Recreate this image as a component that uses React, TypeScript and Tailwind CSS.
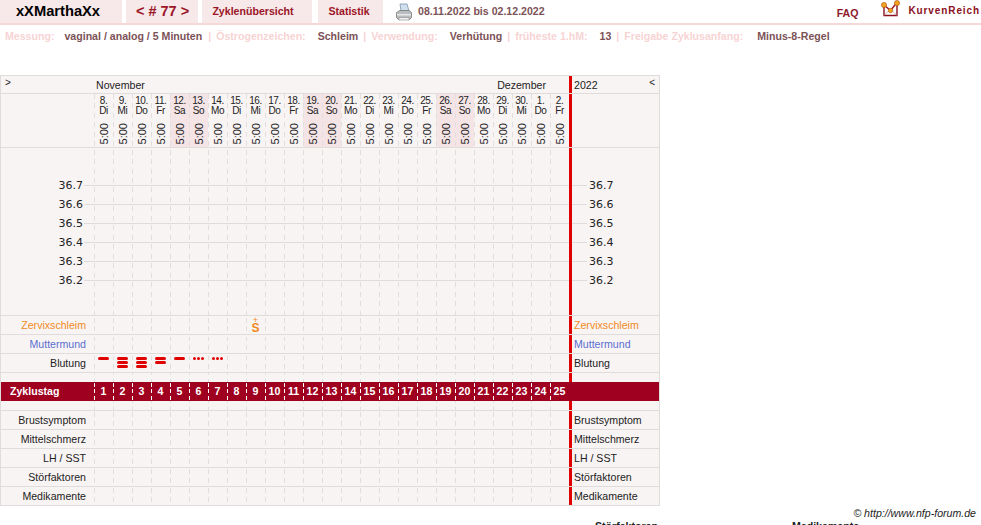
import React from "react";

const days = [
  ["8.", "Di"], ["9.", "Mi"], ["10.", "Do"], ["11.", "Fr"], ["12.", "Sa"], ["13.", "So"], ["14.", "Mo"],
  ["15.", "Di"], ["16.", "Mi"], ["17.", "Do"], ["18.", "Fr"], ["19.", "Sa"], ["20.", "So"], ["21.", "Mo"],
  ["22.", "Di"], ["23.", "Mi"], ["24.", "Do"], ["25.", "Fr"], ["26.", "Sa"], ["27.", "So"], ["28.", "Mo"],
  ["29.", "Di"], ["30.", "Mi"], ["1.", "Do"], ["2.", "Fr"],
];

// dashed column line, two dashes per 19px row
const dash =
  "bg-[linear-gradient(transparent_2px,#e2dedd_2px,#e2dedd_7px,transparent_7px,transparent_11px,#e2dedd_11px,#e2dedd_16px,transparent_16px)] bg-[length:1px_19px] bg-repeat-y bg-left";
const dashWhite =
  "bg-[linear-gradient(transparent_1px,#ffffff_1px,#ffffff_5px,transparent_5px,transparent_7px,#ffffff_7px,#ffffff_11px,transparent_11px,transparent_14px,#ffffff_14px,#ffffff_18px,transparent_18px)] bg-[length:1px_19px] bg-repeat-y bg-left";

const Printer = () => (
  <svg width="18" height="18" viewBox="0 0 18 18">
    <path d="M5 1h7l2 7H6z" fill="#cfe0ee" stroke="#7f93a5" strokeWidth="0.8" />
    <path d="M1.5 9.5 5 7.5h9l2.5 2v5l-2 2h-11l-2-2z" fill="#b9bdbf" stroke="#777" strokeWidth="0.8" />
    <path d="M2 11h14v1.5H2z" fill="#e6e8e9" />
    <path d="M4 14.5h10V17H4z" fill="#f2f2f2" stroke="#888" strokeWidth="0.6" />
  </svg>
);

const Logo = () => (
  <svg width="20" height="18" viewBox="0 0 20 18">
    <path d="M3 5.5v10h13V4" fill="none" stroke="#8b1022" strokeWidth="1.4" />
    <path d="M3 15.5 7.5 11M16 15.5 11.5 11" fill="none" stroke="#c9a0a6" strokeWidth="0.8" />
    <path d="M3 5 9.5 10.5 16 2.5" fill="none" stroke="#a01020" strokeWidth="1.4" />
    <circle cx="3" cy="5" r="2.6" fill="#f2a21b" stroke="#a8501a" strokeWidth="0.6" />
    <circle cx="9.5" cy="10.5" r="2.2" fill="#f2a21b" stroke="#a8501a" strokeWidth="0.6" />
    <circle cx="16" cy="3" r="2.6" fill="#f2a21b" stroke="#a8501a" strokeWidth="0.6" />
  </svg>
);

// one row of the table: label, 25 day cells, red bar, right label
const Row = ({
  label,
  color = "text-[#222]",
  h = "h-[19px] border-b border-[#e0dcdc]",
  right,
  cell,
}: {
  label?: string;
  color?: string;
  h?: string;
  right?: string;
  cell?: (i: number) => React.ReactNode;
}) => (
  <div className={`flex ${h}`}>
    <div className={`w-[93px] shrink-0 pr-2 text-right leading-[18px] ${color}`}>
      {label}
    </div>
    {days.map((_, i) => (
      <div key={i} className={`relative w-[19px] shrink-0 ${dash}`}>
        {cell && cell(i)}
      </div>
    ))}
    <div className="w-[3px] shrink-0 bg-[#e00000]" />
    <div className={`flex-1 pl-[2px] leading-[18px] ${color}`}>{right}</div>
  </div>
);

const temps = ["36.7", "36.6", "36.5", "36.4", "36.3", "36.2"];

const TempRow = ({ t }: { t?: string }) => (
  <div className="flex h-[19px]">
    <div className="flex w-[93px] shrink-0 items-center">
      <span className="w-[83px] pr-[1px] pt-[2px] text-right font-['DejaVu_Sans'] text-[11px] text-[#222]">{t}</span>
      {t && <span className="h-px flex-1 bg-[#e0dcdc]" />}
    </div>
    {days.map((_, i) => (
      <div key={i} className={`flex w-[19px] shrink-0 items-center ${dash}`}>
        {t && <span className="h-px w-full bg-[#e0dcdc]" />}
      </div>
    ))}
    <div className="w-[3px] shrink-0 bg-[#e00000]" />
    <div className="flex flex-1 items-center">
      {t && <span className="h-px w-[15px] bg-[#e0dcdc]" />}
      {t && <span className="pl-[2px] pt-[2px] font-['DejaVu_Sans'] text-[11px] text-[#222]">{t}</span>}
    </div>
  </div>
);

const bleeding: Record<number, number> = { 0: 1, 1: 3, 2: 3, 3: 2, 4: 1 };

const bloodCell = (i: number) => {
  if (bleeding[i]) {
    return (
      <div className="flex flex-col items-center gap-[1px] pt-[3px]">
        {Array.from({ length: bleeding[i] }).map((_, k) => (
          <span key={k} className="h-[3px] w-[11px] rounded-full bg-[#e00000]" />
        ))}
      </div>
    );
  }
  if (i === 5 || i === 6) {
    return (
      <div className="flex justify-center gap-[1px] pt-[3px]">
        <span className="h-[3px] w-[3px] rounded-full bg-[#e00000]" />
        <span className="h-[3px] w-[3px] rounded-full bg-[#e00000]" />
        <span className="h-[3px] w-[3px] rounded-full bg-[#e00000]" />
      </div>
    );
  }
  return null;
};

export default function App() {
  return (
    <div className="relative h-[525px] w-[981px] overflow-hidden bg-white font-['Liberation_Sans',Arial,sans-serif] text-[10.6px]">
      {/* top bar */}
      <div className="flex h-[25px] items-stretch border-b-2 border-[#f6d8d8]">
        <div className="flex w-[122px] items-center justify-center bg-[#f7e9e9] pr-[6px] text-[14.7px] font-bold text-black">xXMarthaXx</div>
        <div className="ml-[4px] flex w-[72px] items-center justify-center bg-[#f7e9e9] pl-[1px] text-[14.5px] font-bold text-[#9b1526]">&lt; # 77 &gt;</div>
        <div className="ml-[4px] flex w-[110px] items-center justify-center bg-[#f7e9e9] pr-[8px] font-bold text-[#9b1526]">Zyklenübersicht</div>
        <div className="ml-[6px] flex w-[65px] items-center justify-center bg-[#f7e9e9] pr-[3px] font-bold text-[#9b1526]">Statistik</div>
        <div className="ml-[12px] flex items-center"><Printer /></div>
        <div className="ml-[5px] flex items-center font-bold text-[#7c5257]">08.11.2022 bis 02.12.2022</div>
        <div className="ml-auto flex items-end pb-[1px] font-bold text-[#8b1a2a]">FAQ</div>
        <div className="ml-[23px] flex pb-[3px]"><Logo /></div>
        <div className="ml-[7px] mr-[1px] flex pt-[3px] text-[10px] font-bold tracking-[0.9px] text-[#8b1022]">KurvenReich</div>
      </div>

      {/* info line */}
      <div className="mt-[4px] flex h-[14px] items-center whitespace-pre font-bold leading-[14px]">
        <span className="ml-[5px] text-[#f7d4d4]">Messung:</span>
        <span className="ml-[10px] text-[#7c5257]">vaginal / analog / 5 Minuten</span>
        <span className="ml-[6px] text-[#f7d4d4]">|</span>
        <span className="ml-[5px] text-[#f7d4d4]">Östrogenzeichen:</span>
        <span className="ml-[12px] text-[#7c5257]">Schleim</span>
        <span className="ml-[5px] text-[#f7d4d4]">|</span>
        <span className="ml-[5px] text-[#f7d4d4]">Verwendung:</span>
        <span className="ml-[12px] text-[#7c5257]">Verhütung</span>
        <span className="ml-[5px] text-[#f7d4d4]">|</span>
        <span className="ml-[5px] text-[#f7d4d4]">früheste 1.hM:</span>
        <span className="ml-[12px] text-[#7c5257]">13</span>
        <span className="ml-[5px] text-[#f7d4d4]">|</span>
        <span className="ml-[5px] text-[#f7d4d4]">Freigabe Zyklusanfang:</span>
        <span className="ml-[14px] text-[#7c5257]">Minus-8-Regel</span>
      </div>

      {/* table */}
      <div className="mt-[32px] w-[660px] border-t border-r border-l border-[#e0dcdc] bg-[#f9f4f4] text-[#222]">
        <div className="flex h-[18px] border-b border-[#e0dcdc]">
          <div className="w-[93px] shrink-0 pl-[4px] text-[10px] leading-[14px]">&gt;</div>
          <div className="flex w-[475px] shrink-0 justify-between leading-[18px]">
            <span className="pl-[2px]">November</span>
            <span className="pr-[23px]">Dezember</span>
          </div>
          <div className="w-[3px] shrink-0 bg-[#e00000]" />
          <div className="flex flex-1 justify-between pl-[2px] leading-[18px]">
            <span>2022</span>
            <span className="pr-[4px] text-[10px] leading-[14px]">&lt;</span>
          </div>
        </div>

        <div className="flex h-[54px] border-b border-[#e0dcdc]">
          <div className="w-[93px] shrink-0" />
          {days.map((d, i) => (
            <div
              key={i}
              className={`flex w-[19px] shrink-0 flex-col items-center ${dash} ${i % 7 === 4 || i % 7 === 5 ? "bg-[#f4e4e6]" : ""}`}
            >
              <div className="mt-[2px] text-center text-[10px] leading-[10px] tracking-[-0.4px]">
                {d[0]}
                <br />
                {d[1]}
              </div>
              <div className="mt-[7px] rotate-180 text-[11px] leading-[12px] [writing-mode:vertical-rl]">5:00</div>
            </div>
          ))}
          <div className="w-[3px] shrink-0 bg-[#e00000]" />
          <div className="flex-1" />
        </div>

        {/* temperature area */}
        <div className="h-[28px] overflow-hidden">
          <TempRow />
          <TempRow />
        </div>
        {temps.map((t) => (
          <TempRow key={t} t={t} />
        ))}
        <div className="h-[26px] overflow-hidden border-b border-[#e0dcdc]">
          <TempRow />
          <TempRow />
        </div>

        <Row
          label="Zervixschleim"
          right="Zervixschleim"
          color="text-[#f08a1d]"
          cell={(i) =>
            i === 8 ? (
              <div className="flex flex-col items-center pt-[1px] text-[#f08a1d]">
                <span className="text-[9px] leading-[6px]">+</span>
                <span className="text-[12px] font-bold leading-[10px]">S</span>
              </div>
            ) : null
          }
        />
        <Row label="Muttermund" right="Muttermund" color="text-[#5a6fd0]" />
        <Row label="Blutung" right="Blutung" cell={bloodCell} />
        <Row h="h-[9px]" />

        <div className="flex h-[19px] bg-[#a00020] font-bold text-white">
          <div className="w-[93px] shrink-0 pl-[9px] leading-[19px]">Zyklustag</div>
          {days.map((_, i) => (
            <div key={i} className={`w-[19px] shrink-0 text-center leading-[19px] ${dashWhite}`}>
              {i + 1}
            </div>
          ))}
          <div className="flex-1" />
        </div>

        <Row h="h-[10px] border-b border-[#e0dcdc]" />
        <Row label="Brustsymptom" right="Brustsymptom" />
        <Row label="Mittelschmerz" right="Mittelschmerz" />
        <Row label="LH / SST" right="LH / SST" />
        <Row label="Störfaktoren" right="Störfaktoren" />
        <Row label="Medikamente" right="Medikamente" />
      </div>

      <div className="w-[976px] text-right italic leading-[14px] text-[#222]">© http://www.nfp-forum.de</div>
      <div className="mt-[-1px] flex font-bold leading-[14px] text-[#222]">
        <span className="ml-[595px]">Störfaktoren</span>
        <span className="ml-[134px]">Medikamente</span>
      </div>
    </div>
  );
}
